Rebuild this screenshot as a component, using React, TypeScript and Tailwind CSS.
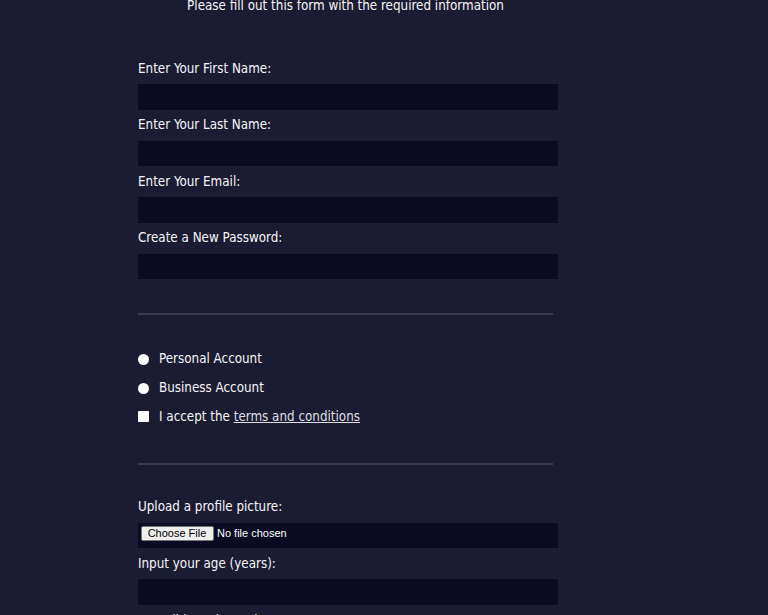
import React from "react";

const fields = [
  { id: "first-name", label: "Enter Your First Name:" },
  { id: "last-name", label: "Enter Your Last Name:" },
  { id: "email", label: "Enter Your Email:" },
  { id: "new-password", label: "Create a New Password:" },
];

function Field({ id, label }: { id: string; label: string }) {
  return (
    <div className="flex flex-col">
      <label htmlFor={id} className="block leading-[16px]">
        {label}
      </label>
      <input
        id={id}
        className="mt-[7.5px] h-[25.5px] w-[420px] bg-[#0a0a23] border border-[#0a0a23] text-white outline-none"
      />
    </div>
  );
}

export default function App() {
  return (
    <div className="h-[615px] overflow-hidden bg-[#1b1b32] text-[#f5f6f7] font-['DejaVu_Sans_Condensed','DejaVu_Sans',sans-serif] [font-stretch:condensed] text-[13.3px]">
      <div className="ml-[138px] w-[415px]">
        {/* heading line, cut at the top */}
        <p className="h-[11px] leading-[11px] text-center">
          Please fill out this form with the required information
        </p>

        <form className="pt-[49.5px]">
          <div className="flex flex-col gap-[7.5px]">
            {fields.map((f) => (
              <Field key={f.id} id={f.id} label={f.label} />
            ))}
          </div>

          <div className="mt-[33.5px] h-[2.5px] bg-[#3b3b4f]" />

          <div className="mt-[35.8px] flex flex-col gap-[13px]">
            <label className="flex items-center gap-[10px] leading-[16px]">
              <span className="mt-[2px] w-[11px] h-[11px] rounded-full bg-white shrink-0" />
              Personal Account
            </label>
            <label className="flex items-center gap-[10px] leading-[16px]">
              <span className="mt-[2px] w-[11px] h-[11px] rounded-full bg-white shrink-0" />
              Business Account
            </label>
            <label className="flex items-center gap-[10px] leading-[16px]">
              <span className="w-[11px] h-[11px] rounded-[1px] bg-white shrink-0" />
              <span>
                I accept the{" "}
                <a href="#" className="text-[#dfdfe2] underline">
                  terms and conditions
                </a>
              </span>
            </label>
          </div>

          <div className="mt-[38px] h-[2.5px] bg-[#3b3b4f]" />

          <div className="mt-[34.2px] flex flex-col gap-[7.5px]">
            <div className="flex flex-col">
              <label className="block leading-[16px]">Upload a profile picture:</label>
              <div className="mt-[7.5px] h-[25.5px] w-[420px] bg-[#0a0a23] flex items-start pt-[3px] pl-[2.5px] gap-[3.5px] font-['Liberation_Sans',Arial,sans-serif] [font-stretch:normal] text-[11px]">
                <span className="h-[15.5px] w-[73px] flex items-center justify-center bg-[#efefef] border border-[#767676] rounded-[2px] text-black">
                  Choose File
                </span>
                <span className="leading-[15.5px] text-white">No file chosen</span>
              </div>
            </div>
            <Field id="age" label="Input your age (years):" />
            <div className="flex flex-col">
              <label className="block leading-[16px] pt-[1px]">How did you hear about us?</label>
            </div>
          </div>
        </form>
      </div>
    </div>
  );
}
